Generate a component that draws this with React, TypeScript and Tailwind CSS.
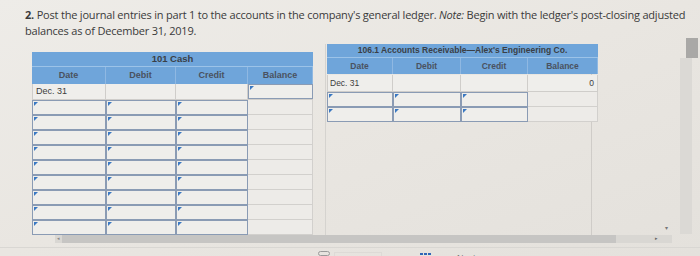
import React from "react";

const Marker = () => (
  <span className="absolute left-[1px] top-[1px] w-0 h-0 border-t-[4px] border-t-[#3a78c2] border-r-[4px] border-r-transparent" />
);

const InputCell = ({ w }: { w: number }) => (
  <div className="relative h-full border-[1.5px] border-[#8a9bb4] bg-[#efeeeb]" style={{ width: w }}>
    <Marker />
  </div>
);

const leftCols = [74, 70, 72, 65];
const rightCols = [66, 68, 67, 70];

function LeftTable() {
  return (
    <div className="w-[281px] text-[9px] text-[#3d3d3d]" style={{ fontFamily: '"Liberation Sans", Arial, sans-serif' }}>
      <div className="h-[15px] bg-[#6fa5da] flex items-center justify-center font-bold text-[9.5px] text-[#3a3f46] border-b border-[#9cc3e8]">101 Cash</div>
      <div className="flex h-[17px] bg-[#6fa5da]">
        {["Date", "Debit", "Credit", "Balance"].map((t, i) => (
          <div key={t} className="flex items-center justify-center font-bold text-[#4a5260] border-r border-[#8fb8e2]" style={{ width: leftCols[i] }}>{t}</div>
        ))}
      </div>
      <div className="flex h-[16px] border-b border-[#cfcdca]">
        <div className="flex items-center pl-[3px] border-l border-r border-[#cfcdca] bg-[#efeeeb]" style={{ width: 74 }}>Dec. 31</div>
        <div className="border-r border-[#cfcdca] bg-[#efeeeb]" style={{ width: 70 }} />
        <div className="border-r border-[#cfcdca] bg-[#efeeeb]" style={{ width: 72 }} />
        <InputCell w={65} />
      </div>
      {Array.from({ length: 9 }).map((_, r) => (
        <div key={r} className="flex h-[15px]">
          <InputCell w={74} />
          <InputCell w={70} />
          <InputCell w={72} />
          <div className="border-b border-r border-[#d2d0cd] bg-[#edebe8]" style={{ width: 65 }} />
        </div>
      ))}
    </div>
  );
}

function RightTable() {
  return (
    <div className="w-[271px] text-[8.5px] text-[#3d3d3d]" style={{ fontFamily: '"Liberation Sans", Arial, sans-serif' }}>
      <div className="h-[14px] bg-[#6fa5da] flex items-center justify-center font-bold text-[#3a3f46] border-b border-[#9cc3e8]">106.1 Accounts Receivable—Alex's Engineering Co.</div>
      <div className="flex h-[16px] bg-[#6fa5da]">
        {["Date", "Debit", "Credit", "Balance"].map((t, i) => (
          <div key={t} className="flex items-center justify-center font-bold text-[#4a5260] border-r border-[#8fb8e2]" style={{ width: rightCols[i] }}>{t}</div>
        ))}
      </div>
      <div className="flex h-[17px] mt-[1px] border-b border-[#cfcdca]">
        <div className="flex items-center pl-[2px] border-l border-r border-[#cfcdca] bg-[#efeeeb]" style={{ width: 66 }}>Dec. 31</div>
        <div className="border-r border-[#cfcdca] bg-[#efeeeb]" style={{ width: 68 }} />
        <div className="border-r border-[#cfcdca] bg-[#efeeeb]" style={{ width: 67 }} />
        <div className="flex justify-end pr-[3px] pt-[2px] border-r border-[#cfcdca] bg-[#efeeeb]" style={{ width: 70 }}>0</div>
      </div>
      {Array.from({ length: 2 }).map((_, r) => (
        <div key={r} className="flex h-[15px]">
          <InputCell w={66} />
          <InputCell w={68} />
          <InputCell w={67} />
          <div className="border-b border-r border-[#d2d0cd] bg-[#edebe8]" style={{ width: 70 }} />
        </div>
      ))}
    </div>
  );
}

export default function App() {
  return (
    <div className="w-[700px] h-[256px] overflow-hidden bg-gradient-to-br from-[#eeece8] via-[#e9e6e1] to-[#e4e1dc] flex flex-col" style={{ fontFamily: '"Open Sans", "Liberation Sans", sans-serif' }}>
      <p className="pl-[25px] pr-[10px] pt-[7px] text-[11px] leading-[16px] text-[#3a3a3a] tracking-[-0.2px]">
        <span className="font-bold">2.</span> Post the journal entries in part 1 to the accounts in the company's general ledger. <i>Note:</i> Begin with the ledger's post-closing adjusted balances as of December 31, 2019.
      </p>
      <div className="flex mt-[5px] h-[190px]">
        <div className="flex-1 flex flex-col">
          <div className="flex flex-1">
            <div className="pl-[32px] pt-[8px] pr-[12px] border-r border-[#d5d3cf]">
              <LeftTable />
            </div>
            <div className="pl-[1px] flex border-r border-[#cfccc8] w-[266px]">
              <RightTable />
            </div>
            <div className="flex-1 flex flex-col items-end justify-end pr-[4px] pb-[2px]">
              <span className="text-[6px] text-[#777]">▾</span>
            </div>
          </div>
          <div className="h-[11px] ml-[55px] flex bg-[#d9d7d3]">
            <div className="w-[7px] flex items-center justify-center text-[5px] text-[#888]">◂</div>
            <div className="w-[554px] bg-[#c6c5c3]" />
            <div className="flex-1 flex items-center justify-end pr-[14px] text-[5px] text-[#666]">▸</div>
          </div>
        </div>
        <div className="w-[28px] flex flex-col pl-[8px] pr-[2px] -mt-[6px]">
          <div className="h-[20px] bg-[#a9a8a6] ml-[6px]" />
          <div className="flex-1 bg-[#dbd9d5] mr-[6px]" />
        </div>
      </div>
      <div className="mt-[13px] border-t border-[#d9d7d3] flex items-start h-[20px] pt-[2px]">
        <div className="ml-[318px] w-[12px] h-[5px] border border-[#9a9a9a] rounded-full mt-[1px]" />
        <div className="ml-[4px] w-[48px] h-[8px] border border-[#dddad6] mt-[2px]" />
        <div className="ml-[38px] mt-[3px] grid grid-cols-3 gap-[1px]">
          {Array.from({ length: 6 }).map((_, i) => (
            <span key={i} className="w-[3px] h-[2px] bg-[#2f66b7]" />
          ))}
        </div>
        <span className="ml-[26px] mt-[2px] text-[9px] text-[#777]" style={{ fontFamily: '"Liberation Sans", sans-serif' }}>Next</span>
        <span className="ml-[10px] mt-[1px] text-[10px] text-[#2f66b7] font-bold">›</span>
      </div>
    </div>
  );
}
